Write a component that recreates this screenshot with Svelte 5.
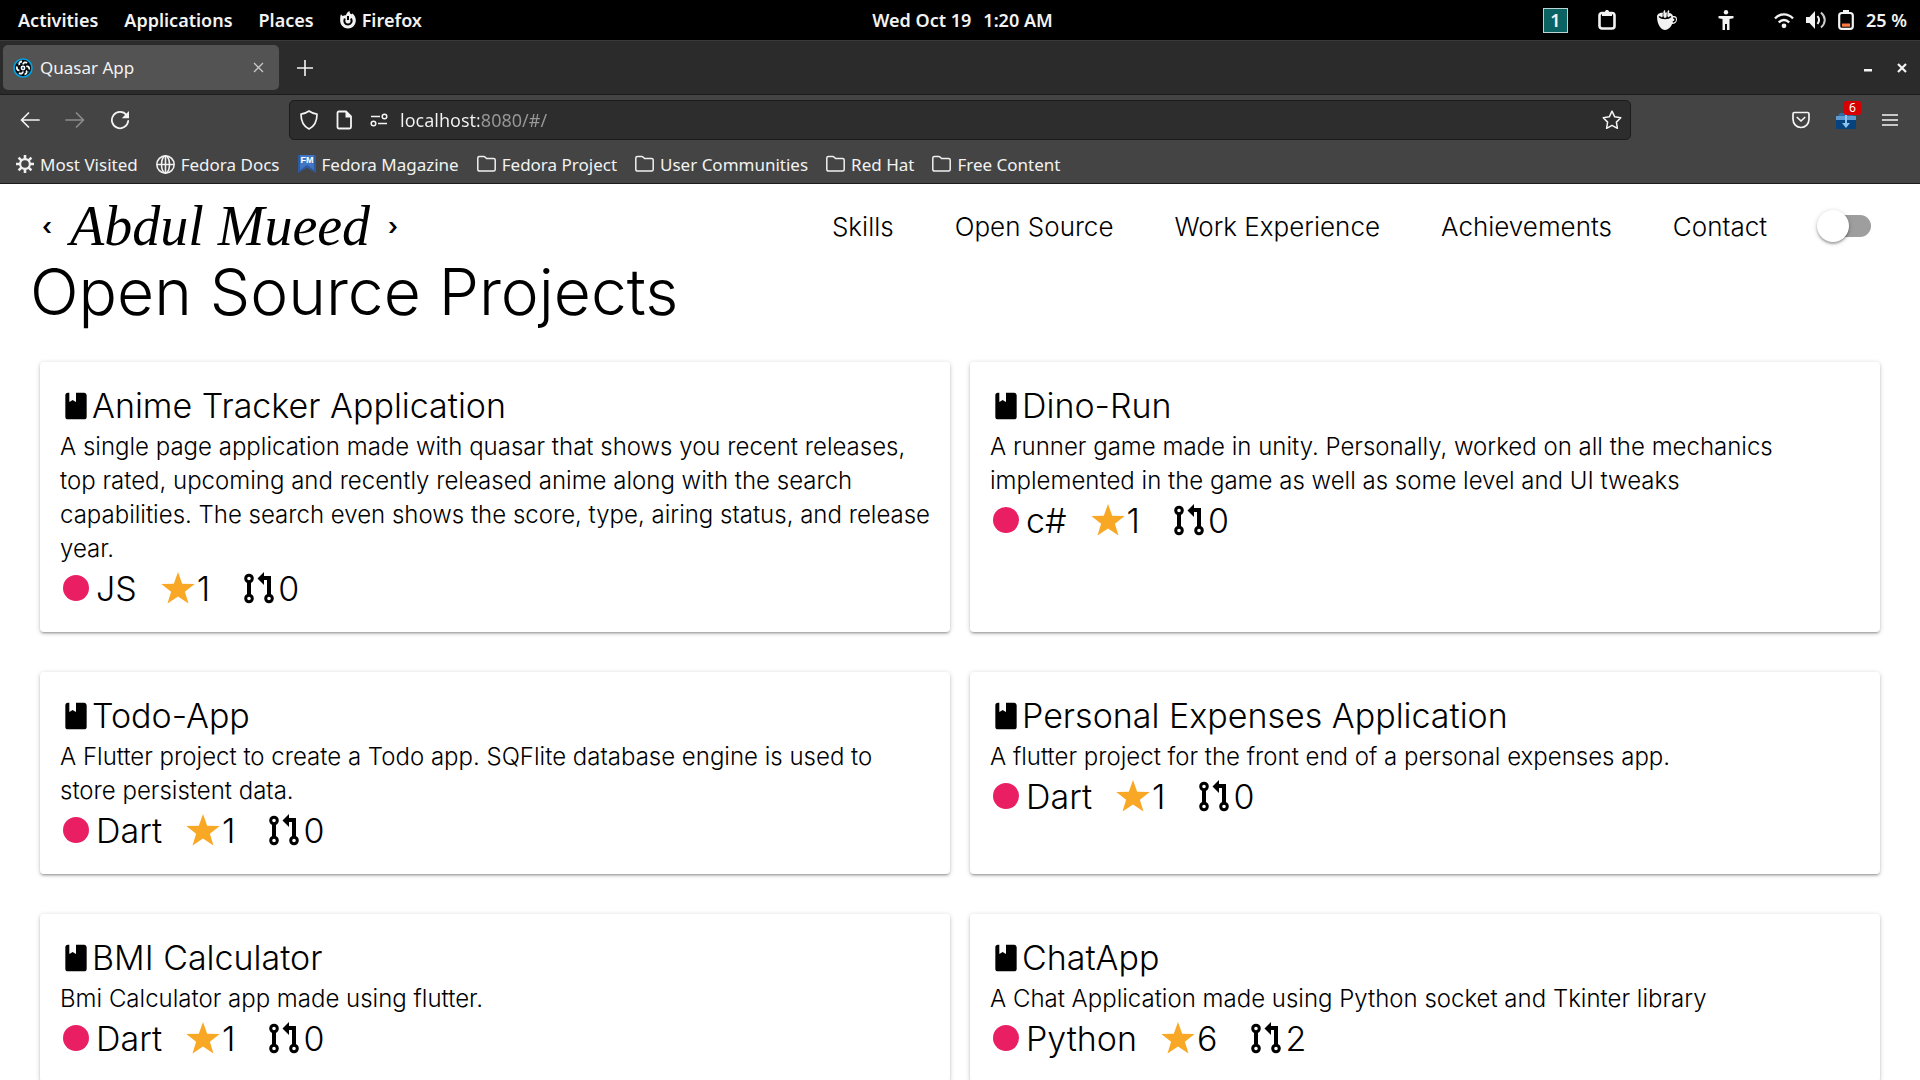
<script>
  const bookmarks = [
    { label: 'Most Visited', icon: 'gear' },
    { label: 'Fedora Docs', icon: 'globe' },
    { label: 'Fedora Magazine', icon: 'fm' },
    { label: 'Fedora Project', icon: 'folder' },
    { label: 'User Communities', icon: 'folder' },
    { label: 'Red Hat', icon: 'folder' },
    { label: 'Free Content', icon: 'folder' }
  ];

  const sections = ['Skills', 'Open Source', 'Work Experience', 'Achievements', 'Contact'];

  const projects = [
    {
      name: 'Anime Tracker Application',
      text: 'A single page application made with quasar that shows you recent releases, top rated, upcoming and recently released anime along with the search capabilities. The search even shows the score, type, airing status, and release year.',
      language: 'JS', stars: 1, pulls: 0
    },
    {
      name: 'Dino-Run',
      text: 'A runner game made in unity. Personally, worked on all the mechanics implemented in the game as well as some level and UI tweaks',
      language: 'c#', stars: 1, pulls: 0
    },
    {
      name: 'Todo-App',
      text: 'A Flutter project to create a Todo app. SQFlite database engine is used to store persistent data.',
      language: 'Dart', stars: 1, pulls: 0
    },
    {
      name: 'Personal Expenses Application',
      text: 'A flutter project for the front end of a personal expenses app.',
      language: 'Dart', stars: 1, pulls: 0
    },
    {
      name: 'BMI Calculator',
      text: 'Bmi Calculator app made using flutter.',
      language: 'Dart', stars: 1, pulls: 0
    },
    {
      name: 'ChatApp',
      text: 'A Chat Application made using Python socket and Tkinter library',
      language: 'Python', stars: 6, pulls: 2
    }
  ];

  let address = $state('localhost:8080/#/');
  let dark = $state(false);
</script>

<div class="screen">
  <div class="topbar">
    <div class="menus">
      <button>Activities</button>
      <button>Applications</button>
      <button>Places</button>
      <button class="app">
        <svg width="16" height="18" viewBox="0 0 16 18" aria-hidden="true">
          <path fill="#f2f2f2" d="M1 3c.4 1 .8 1.500 1.700 2C4 4.200 5 4 6 4.200 6.500 2.500 7.500 1 9.500 0c0 1.500.5 2.500 1.800 3.300l1.200-.8c2.200 1.700 3.500 4.500 3.300 7.500-.3 4.500-3.800 7.500-7.800 7.500S.3 14.300.2 10C.1 7.300.2 4.800 1 3z" />
          <path fill="none" stroke="#000" stroke-width="2" d="M4.800 7.500C3.500 11 5 13.500 8 13.500s4.500-3 3-6M8 5v4" />
        </svg>
        Firefox
      </button>
    </div>
    <button class="clock"><span>Wed Oct 19</span><span>1:20 AM</span></button>
    <div class="status">
      <span class="workspace">1</span>
      <button aria-label="Clipboard">
        <svg width="18" height="20" viewBox="0 0 18 20" aria-hidden="true">
          <rect x="1.500" y="3" width="15" height="15.500" rx="2.500" fill="none" stroke="#f2f2f2" stroke-width="2.600" />
          <path fill="#f2f2f2" d="M4 2h3c0-2.600 4-2.600 4 0h3v4H4z" />
        </svg>
      </button>
      <button aria-label="Caffeine">
        <svg width="22" height="20" viewBox="0 0 22 20" aria-hidden="true">
          <path fill="#f2f2f2" d="M1 6c1-3 4-3.500 8-3.500S16 3 17 6c3-.5 4 1 4 3.500S19 14 16.200 14C14.500 17.500 12 20 9 20S1 16 1 6z" />
          <path fill="none" stroke="#000" stroke-width="1.500" d="M17.200 8c2 0 2 .7 2 1.600s-.6 2.200-2.400 2.500M3 6.500c2.500 2.600 9.500 2.600 12 0M6.500 8.500c2-2 0-4 1.500-6M10.500 8.500c2-2 0-4 1.500-6" />
          <path fill="none" stroke="#f2f2f2" stroke-width="1.500" d="M7.800 6.500c1-2-.5-3.500 1-6M11.800 6.500c1-2-.5-3.500 1-6" />
        </svg>
      </button>
      <button aria-label="Accessibility">
        <svg width="16" height="20" viewBox="0 0 16 20" aria-hidden="true">
          <circle cx="8" cy="2.200" r="2.200" fill="#f2f2f2" />
          <path fill="#f2f2f2" d="M.5 6h15v2.200L11.500 9v11H9v-6H7v6H4.500V9L.5 8.200z" />
        </svg>
      </button>
      <button class="system" aria-label="System menu, battery 25 %">
        <svg width="20" height="17" viewBox="0 0 20 17" aria-hidden="true">
          <path fill="none" stroke="#f2f2f2" stroke-width="2.400" d="M1 6.500c5-5.500 13-5.500 18 0M4.800 10.500c3-3.300 7.400-3.300 10.400 0" />
          <circle cx="10" cy="13.800" r="2.400" fill="#f2f2f2" />
        </svg>
        <svg width="20" height="18" viewBox="0 0 20 18" aria-hidden="true">
          <path fill="#f2f2f2" d="M0 6h3.500L9 0v18l-5.500-6H0z" />
          <path fill="none" stroke="#f2f2f2" stroke-width="2" d="M11.500 5c1.800 2.300 1.800 5.700 0 8" />
          <path fill="none" stroke="#ccc" stroke-width="2" d="M15 1.500c5 4.500 5 10.500 0 15" />
        </svg>
        <svg width="16" height="20" viewBox="0 0 16 20" aria-hidden="true">
          <rect x="1.200" y="3" width="13.600" height="15.800" rx="2.600" fill="none" stroke="#f2f2f2" stroke-width="2.200" />
          <path fill="#f2f2f2" d="M5 0h6v3H5z" />
          <path fill="#ff7840" d="M4 13.500h8v3.200H4z" />
        </svg>
        <span>25 %</span>
      </button>
    </div>
  </div>

  <div class="tabstrip">
    <div class="tab">
      <svg width="20" height="20" viewBox="0 0 20 20" aria-hidden="true">
        <circle cx="10" cy="10" r="9" fill="#060b10" stroke="#00a3e0" stroke-width="1.600" />
        <path fill="none" stroke="#fff" stroke-width="1.800" d="M9 3.500c-2 0-3.500 1.500-2.500 3.500M4 8.500c-.6 2 .3 4 2.500 3.800M6 15c1.600 1.200 3.800.7 4-1.500M11.500 16.500c2-.5 3-2.300 1.700-4M16.200 11.500c.4-2-1-3.700-3-3M14 5c-1.500-1.300-3.500-.7-4 1.400" />
        <circle cx="10" cy="10" r="2.400" fill="#fff" />
        <circle cx="10" cy="10" r="1" fill="#0a4c70" />
        <path fill="none" stroke="#00a3e0" d="M4.500 6 6 4.500M14.500 15l1.200-1.500" />
      </svg>
      <span class="tabname">Quasar App</span>
      <button aria-label="Close tab">
        <svg width="11" height="11" viewBox="0 0 11 11" aria-hidden="true"><path stroke="#c8c8c8" stroke-width="1.300" d="m1 1 9 9M10 1l-9 9" /></svg>
      </button>
    </div>
    <button class="newtab" aria-label="New tab">
      <svg width="16" height="16" viewBox="0 0 16 16" aria-hidden="true"><path stroke="#f4f4f4" stroke-width="1.600" d="M8 0v16M0 8h16" /></svg>
    </button>
    <div class="window">
      <button aria-label="Minimize">
        <svg width="10" height="12" viewBox="0 0 10 12" aria-hidden="true"><path fill="#f4f4f4" d="M1 7h8v2.500H1z" /></svg>
      </button>
      <button aria-label="Close window">
        <svg width="10" height="10" viewBox="0 0 10 10" aria-hidden="true"><path stroke="#f4f4f4" stroke-width="2.200" d="m1 1 8 8M9 1 1 9" /></svg>
      </button>
    </div>
  </div>

  <div class="toolbar">
    <div class="history">
      <button aria-label="Back">
        <svg width="20" height="18" viewBox="0 0 20 18" aria-hidden="true"><path fill="none" stroke="#f4f4f4" stroke-width="1.700" stroke-linecap="round" stroke-linejoin="round" d="M8.500 2 1.500 9l7 7M1.500 9H19" /></svg>
      </button>
      <button aria-label="Forward" disabled>
        <svg width="20" height="18" viewBox="0 0 20 18" aria-hidden="true"><path fill="none" stroke="#8c8c8c" stroke-width="1.700" stroke-linecap="round" stroke-linejoin="round" d="m11.500 2 7 7-7 7M18.500 9H1" /></svg>
      </button>
      <button aria-label="Reload">
        <svg width="20" height="20" viewBox="0 0 20 20" aria-hidden="true">
          <path fill="none" stroke="#f4f4f4" stroke-width="1.800" stroke-linecap="round" d="M16.500 5A8.200 8.200 0 1 0 18.200 11" />
          <path fill="#f4f4f4" d="M19 1v7.200h-7.200z" />
        </svg>
      </button>
    </div>
    <div class="urlbar">
      <svg width="18" height="20" viewBox="0 0 18 20" aria-hidden="true"><path fill="none" stroke="#f4f4f4" stroke-width="1.700" stroke-linejoin="round" d="M9 1c2.500 1.800 5 2.800 8 3.200 0 6.800-2 11.800-8 14.800-6-3-8-8-8-14.800C4 3.800 6.500 2.800 9 1z" /></svg>
      <svg width="16" height="20" viewBox="0 0 16 20" aria-hidden="true">
        <path fill="none" stroke="#f4f4f4" stroke-width="1.800" stroke-linejoin="round" d="M3 1.500h7l5 5V17c0 1-.5 1.500-1.500 1.500H3c-1 0-1.500-.5-1.500-1.500V3c0-1 .5-1.500 1.500-1.500z" />
        <path fill="#f4f4f4" d="M9.500 1v6.500H15z" />
      </svg>
      <svg width="18" height="14" viewBox="0 0 18 14" aria-hidden="true">
        <path stroke="#f4f4f4" stroke-width="1.600" d="M1 3.500h9M8 10.500h9" />
        <circle cx="14.500" cy="3.500" r="2.300" fill="none" stroke="#f4f4f4" stroke-width="1.500" />
        <circle cx="3.500" cy="10.500" r="2.300" fill="none" stroke="#f4f4f4" stroke-width="1.500" />
      </svg>
      <input type="text" aria-label="Address" bind:value={address} />
      <button aria-label="Bookmark this page">
        <svg width="20" height="20" viewBox="0 0 20 20" aria-hidden="true"><path fill="none" stroke="#f4f4f4" stroke-width="1.500" stroke-linejoin="round" d="m10 1.200 2.700 5.600 6.100.9-4.400 4.400 1 6.200L10 15.400l-5.400 2.900 1-6.200L1.200 7.700l6.100-.9z" /></svg>
      </button>
    </div>
    <div class="tools">
      <button aria-label="Save to Pocket">
        <svg width="18" height="18" viewBox="0 0 18 18" aria-hidden="true"><path fill="none" stroke="#f4f4f4" stroke-width="1.700" stroke-linecap="round" stroke-linejoin="round" d="M2.500 1.500h13c1 0 1.500.5 1.500 1.500v5c0 5-3.500 8.500-8 8.500S1 13 1 8V3c0-1 .5-1.500 1.500-1.500zM5.300 6.500 9 10l3.700-3.500" /></svg>
      </button>
      <button class="extension" aria-label="Downloads extension, 6 items">
        <svg width="20" height="18" viewBox="0 0 20 18" aria-hidden="true">
          <path fill="#2e6ca8" d="M1 6 4 2h12l3 4z" />
          <path fill="#5d9bd0" d="M0 5h20v4H0z" />
          <path fill="#06427e" d="M0 9h20v9H0z" />
          <path fill="#8cc4ee" d="M9 3h2v9h3l-4 5-4-5h3z" />
        </svg>
        <span class="badge">6</span>
      </button>
      <button aria-label="Open menu">
        <svg width="16" height="14" viewBox="0 0 16 14" aria-hidden="true"><path stroke="#f4f4f4" stroke-width="1.500" d="M0 2h16M0 7h16M0 12h16" /></svg>
      </button>
    </div>
  </div>

  <div class="bookmarks">
    {#each bookmarks as mark}
      <button>
        {#if mark.icon === 'gear'}
          <svg width="18" height="18" viewBox="0 0 18 18" aria-hidden="true">
            <path stroke="#f0f0f0" stroke-width="2.600" d="M9 0v18M0 9h18M2.600 2.600l12.800 12.800M15.400 2.600 2.600 15.400" />
            <circle cx="9" cy="9" r="4.900" fill="#444" stroke="#f0f0f0" stroke-width="2.200" />
          </svg>
        {:else if mark.icon === 'globe'}
          <svg width="19" height="19" viewBox="0 0 18 18" aria-hidden="true">
            <g fill="none" stroke="#f0f0f0" stroke-width="1.500"><circle cx="9" cy="9" r="8.200" /><ellipse cx="9" cy="9" rx="3.800" ry="8.200" /><path d="M1 9h16M9 1v16" /></g>
          </svg>
        {:else if mark.icon === 'fm'}
          <svg width="18" height="18" viewBox="0 0 18 18" aria-hidden="true">
            <path fill="#2f5a9e" d="M0 0h18v18l-9-5-9 5z" />
            <path fill="#3f77c4" d="M2 0h14v15l-7-5-7 5z" />
            <text x="9" y="8" text-anchor="middle" font-family="Liberation Sans, sans-serif" font-weight="700" font-size="9" fill="#fff">FM</text>
          </svg>
        {:else}
          <svg width="19" height="18" viewBox="0 0 19 18" aria-hidden="true"><path fill="none" stroke="#f0f0f0" stroke-width="1.500" stroke-linejoin="round" d="M2.500 1.500h4.300c.8 0 1 .3 1.500.8l1.200 1.200h7c1 0 1.700.6 1.700 1.500v9.500c0 1-.7 1.500-1.700 1.500h-14c-1 0-1.700-.5-1.700-1.500V3c0-1 .7-1.500 1.700-1.500z" /></svg>
        {/if}
        <span>{mark.label}</span>
      </button>
    {/each}
  </div>

  <div class="page">
    <header>
      <a class="signature" href="#/"><span>‹</span><span class="name">Abdul Mueed</span><span>›</span></a>
      <nav>
        {#each sections as section}
          <a href="#/">{section}</a>
        {/each}
      </nav>
      <input class="toggle" type="checkbox" aria-label="Dark mode" bind:checked={dark} />
    </header>

    <main>
      <h1>Open Source Projects</h1>
      <div class="cards">
        {#each projects as project}
          <article>
            <h2>
              <svg width="32" height="32" viewBox="0 0 24 24" aria-hidden="true"><path d="M18 22a2 2 0 0 0 2-2V4c0-1.100-.9-2-2-2h-6v7L9.500 7.500 7 9V2H6a2 2 0 0 0-2 2v16a2 2 0 0 0 2 2h12z" /></svg>
              {project.name}
            </h2>
            <p>{project.text}</p>
            <div class="stats">
              <span class="language">
                <svg width="32" height="32" viewBox="0 0 32 32" aria-hidden="true"><circle cx="16" cy="16" r="13" fill="#e91e63" /></svg>
                {project.language}
              </span>
              <span class="stars">
                <svg width="34" height="32" viewBox="0 0 34 32" aria-hidden="true"><path fill="#f9a825" d="M17 0l4.200 11.800 12.500.2-9.800 7.800L27.500 31.500 17 24.600 6.500 31.500 10.100 19.800.3 12l12.500-.2z" /></svg>
                {project.stars}
              </span>
              <span class="pulls">
                <svg width="34" height="32" viewBox="0 0 34 32" aria-hidden="true">
                  <g fill="none" stroke="#000" stroke-width="3">
                    <circle cx="7" cy="6.500" r="3.300" /><circle cx="7" cy="26.500" r="3.300" /><circle cx="27" cy="26.500" r="3.300" />
                    <path stroke-width="4" d="M7 9v15M27 24V6h-6" />
                  </g>
                  <path d="M22 0v13l-6.500-6.500z" />
                </svg>
                {project.pulls}
              </span>
            </div>
          </article>
        {/each}
      </div>
    </main>
  </div>
</div>

<style>
  :global(body) {
    margin: 0;
    background: #fff;
  }
  .screen {
    height: 100vh;
    overflow: hidden;
    display: flex;
    flex-direction: column;
    font-family: 'Noto Sans', sans-serif;
    font-size: 17px;
    color: #f2f2f2;
  }
  button {
    padding: 0;
    border: 0;
    background: none;
    color: inherit;
    font: inherit;
    display: flex;
    align-items: center;
  }
  svg {
    display: block;
    flex: none;
  }
  .topbar {
    flex: none;
    height: 40px;
    padding: 0 13px 0 18px;
    display: grid;
    grid-template-columns: 1fr auto 1fr;
    align-items: center;
    background: #000;
    font-size: 18px;
    font-weight: 600;
  }
  .menus {
    display: flex;
    gap: 26px;
  }
  .app {
    gap: 6px;
  }
  .clock {
    gap: 12px;
  }
  .status {
    display: flex;
    align-items: center;
    justify-content: flex-end;
    gap: 40px;
  }
  .workspace {
    width: 23px;
    height: 23px;
    border: 1px solid #b8d4d4;
    background: #0b6262;
    text-align: center;
    line-height: 23px;
    margin-right: -10px;
  }
  .system {
    gap: 12px;
  }
  .tabstrip {
    flex: none;
    height: 53px;
    padding: 0 13px 0 3px;
    display: flex;
    align-items: center;
    background: #2b2b2b;
    border-top: 1px solid #3a3a3a;
    border-bottom: 1px solid #1c1c1c;
  }
  .tab {
    box-sizing: border-box;
    width: 276px;
    height: 45px;
    padding: 0 15px 0 10px;
    display: flex;
    align-items: center;
    gap: 7px;
    border-radius: 5px;
    background: #535353;
  }
  .tabname {
    flex: 1;
  }
  .newtab {
    margin-left: 18px;
  }
  .window {
    margin-left: auto;
    display: flex;
    align-items: center;
    gap: 24px;
  }
  .toolbar {
    flex: none;
    height: 50px;
    padding: 0 22px 0 20px;
    display: flex;
    align-items: center;
    background: #444;
  }
  .history {
    width: 269px;
    display: flex;
    align-items: center;
    gap: 25px;
  }
  .urlbar {
    box-sizing: border-box;
    flex: 1;
    height: 40px;
    padding: 0 8px 0 10px;
    display: flex;
    align-items: center;
    gap: 18px;
    border: 1px solid #1c1c1c;
    border-radius: 5px;
    background: #2d2d2d;
  }
  .urlbar input {
    flex: 1;
    min-width: 0;
    margin-left: -6px;
    padding: 0;
    border: 0;
    outline: 0;
    font: inherit;
    font-size: 18px;
    color: transparent;
    background: linear-gradient(90deg, #f4f4f4 79px, #989898 79px);
    background-clip: text;
  }
  .tools {
    width: 267px;
    display: flex;
    align-items: center;
    justify-content: flex-end;
    gap: 26px;
  }
  .extension {
    position: relative;
  }
  .badge {
    position: absolute;
    top: -10px;
    left: 8px;
    width: 17px;
    height: 14px;
    border-radius: 2px;
    background: #d70000;
    color: #fff;
    font-size: 12px;
    line-height: 14px;
    text-align: center;
  }
  .bookmarks {
    flex: none;
    height: 38px;
    padding: 0 16px;
    display: flex;
    align-items: center;
    gap: 18px;
    background: #444;
    border-bottom: 1px solid #1c1c1c;
  }
  .bookmarks button {
    gap: 6px;
  }
  .page {
    flex: 1;
    min-height: 0;
    overflow: hidden;
    background: #fff;
    color: #000;
    font-family: Inter, sans-serif;
    font-weight: 300;
  }
  header {
    height: 84px;
    padding: 0 49px 0 42px;
    display: flex;
    align-items: center;
  }
  header a {
    color: inherit;
    text-decoration: none;
  }
  .signature {
    display: flex;
    align-items: center;
    gap: 18px;
    font-size: 24px;
    font-weight: 600;
  }
  .name {
    font-family: 'Liberation Serif', serif;
    font-style: italic;
    font-weight: 400;
    font-size: 56px;
    line-height: 60px;
  }
  nav {
    margin-left: auto;
    display: flex;
    gap: 61px;
    font-size: 26px;
  }
  .toggle {
    appearance: none;
    width: 54px;
    height: 32px;
    margin: 0 0 0 50px;
    display: grid;
    align-items: center;
  }
  .toggle::before,
  .toggle::after {
    content: '';
    grid-area: 1 / 1;
  }
  .toggle::before {
    height: 22px;
    margin: 0 0 0 5px;
    border-radius: 11px;
    background: #9e9e9e;
  }
  .toggle::after {
    width: 32px;
    height: 32px;
    border-radius: 50%;
    background: #fff;
    box-shadow: 0 2px 2px rgba(0, 0, 0, 0.25), 0 1px 5px rgba(0, 0, 0, 0.2);
  }
  .toggle:checked::after {
    justify-self: end;
  }
  h1 {
    margin: 0;
    padding: 0 30px;
    font-size: 64px;
    font-weight: 300;
    line-height: 48px;
  }
  .cards {
    padding: 46px 40px;
    display: grid;
    grid-template-columns: 1fr 1fr;
    gap: 40px 20px;
  }
  article {
    padding: 20px 18px 22px 20px;
    border-radius: 4px;
    background: #fff;
    box-shadow: 0 1px 5px rgba(0, 0, 0, 0.2), 0 2px 2px rgba(0, 0, 0, 0.14), 0 3px 1px -2px rgba(0, 0, 0, 0.12);
  }
  h2 {
    margin: 0;
    display: flex;
    align-items: center;
    font-size: 34px;
    font-weight: 300;
    line-height: 48px;
  }
  p {
    margin: 0;
    font-size: 24px;
    line-height: 34px;
  }
  .stats {
    height: 44px;
    display: flex;
    align-items: center;
    font-size: 34px;
  }
  .stats span {
    display: flex;
    align-items: center;
  }
  .language {
    gap: 4px;
  }
  .stars {
    margin-left: 24px;
    gap: 2px;
  }
  .pulls {
    margin-left: 32px;
    gap: 2px;
  }
</style>
